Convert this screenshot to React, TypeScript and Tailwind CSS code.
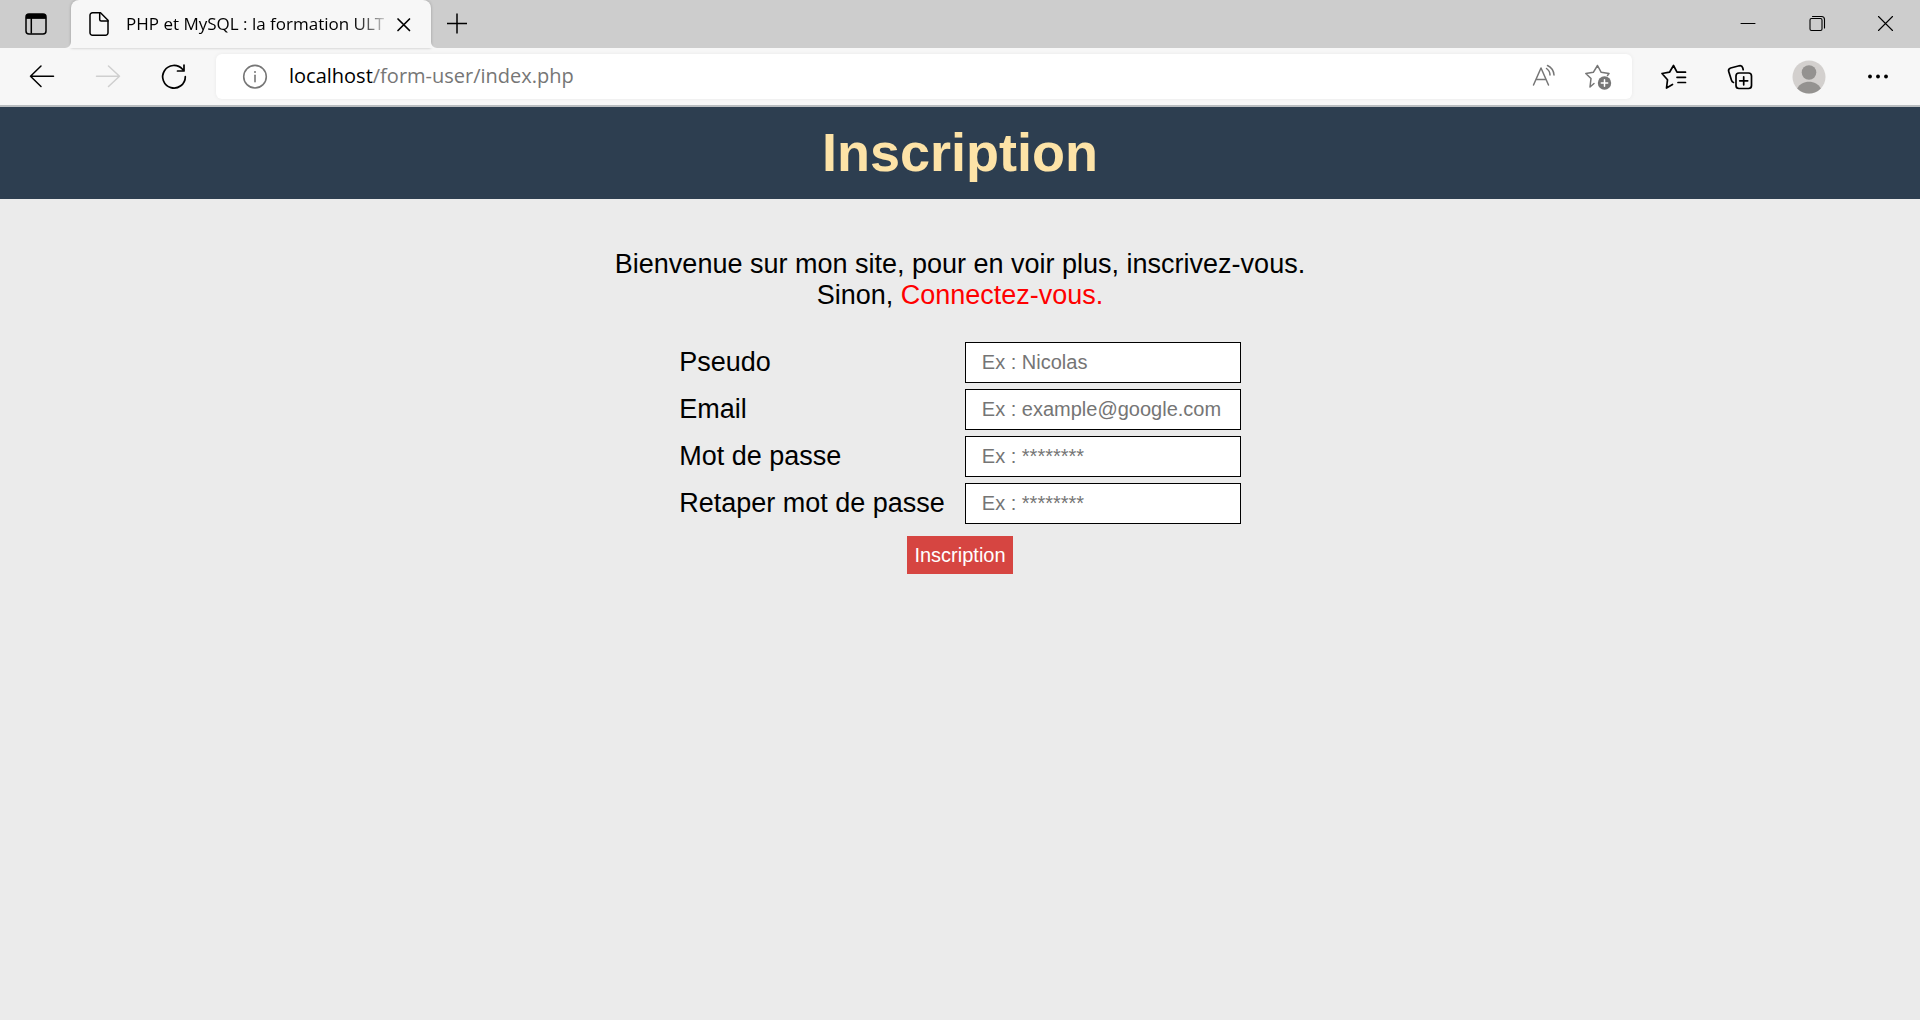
import type { ReactNode } from "react";

function Icon({ size = 28, stroke = 1.5, className = "", children }: { size?: number; stroke?: number; className?: string; children: ReactNode }) {
  return (
    <svg
      width={size}
      height={size}
      viewBox={`0 0 ${size} ${size}`}
      fill="none"
      stroke="currentColor"
      strokeWidth={stroke}
      strokeLinecap="round"
      strokeLinejoin="round"
      aria-hidden="true"
      className={`shrink-0 ${className}`}
    >
      {children}
    </svg>
  );
}

function IconButton({ label, className, children }: { label: string; className: string; children: ReactNode }) {
  return (
    <button type="button" aria-label={label} className={`flex shrink-0 items-center justify-center ${className}`}>
      {children}
    </button>
  );
}

function TabStrip() {
  return (
    <div className="flex h-12 items-stretch bg-[#cdcdcd] text-black">
      <IconButton label="Menu des onglets" className="w-[71px]">
        <Icon size={24} stroke={1.5}>
          <rect x="2" y="2" width="20" height="20" rx="3" />
          <path d="M2 6.500V5a3 3 0 0 1 3-3h14a3 3 0 0 1 3 3v1.500z" fill="currentColor" stroke="none" />
          <path d="M2.500 6H21.500M7.300 7v14" />
        </Icon>
      </IconButton>

      <div className="relative flex w-[360px] items-center rounded-t-lg bg-[#f7f7f7] pl-[14px] shadow-[0_0_3px_rgba(0,0,0,0.25)]">
        <svg width="6" height="6" viewBox="0 0 6 6" className="absolute bottom-0 -left-[6px]" aria-hidden="true">
          <path d="M6 0v6H0A6 6 0 0 0 6 0z" fill="#f7f7f7" />
        </svg>
        <svg width="6" height="6" viewBox="0 0 6 6" className="absolute -right-[6px] bottom-0" aria-hidden="true">
          <path d="M0 0v6h6A6 6 0 0 1 0 0z" fill="#f7f7f7" />
        </svg>
        <Icon size={28}>
          <path d="M7.500 2.800h8L23 10.200v12.500a2.500 2.500 0 0 1-2.500 2.500h-13A2.500 2.500 0 0 1 5 22.700V5.300a2.500 2.500 0 0 1 2.500-2.500z" />
          <path d="M14.700 3v6.500a1.500 1.500 0 0 0 1.500 1.500H23" />
        </Icon>
        <span className="ml-[13px] w-[262px] whitespace-nowrap bg-linear-to-r from-black from-85% to-[#e4e4e4] to-100% bg-clip-text font-['Open_Sans',sans-serif] text-[17px] leading-6 text-transparent">
          PHP et MySQL : la formation ULT
        </span>
        <IconButton label="Fermer l'onglet" className="h-8 w-8">
          <Icon size={16} stroke={1.7}>
            <path d="M2 3l11.500 11.500M13.500 3L2 14.500" />
          </Icon>
        </IconButton>
      </div>

      <IconButton label="Nouvel onglet" className="w-[52px]">
        <Icon size={24}>
          <path d="M2 11.500h20M12 1.500v20" strokeLinecap="butt" />
        </Icon>
      </IconButton>

      <div className="ml-auto flex">
        <IconButton label="Réduire" className="w-[69px]">
          <Icon size={18} stroke={1}>
            <path d="M2 8.500h14" />
          </Icon>
        </IconButton>
        <IconButton label="Restaurer" className="w-[69px]">
          <Icon size={18} stroke={1.1}>
            <rect x="2" y="3.500" width="12" height="12" rx="1.500" />
            <path d="M4.500 1.500h9a3 3 0 0 1 3 3V13" />
          </Icon>
        </IconButton>
        <IconButton label="Fermer" className="w-[69px]">
          <Icon size={18} stroke={1.1}>
            <path d="M1.500 1.500l14 14M15.500 1.500l-14 14" />
          </Icon>
        </IconButton>
      </div>
    </div>
  );
}

function Toolbar() {
  return (
    <div className="flex h-[59px] items-center border-b-2 border-[#b9bdc0] bg-[#f7f7f7] px-[9px] text-black">
      <IconButton label="Précédent" className="h-11 w-[66px]">
        <Icon>
          <path d="M13 3L2.500 13.200 13 23.500M2.500 13.200h23" />
        </Icon>
      </IconButton>
      <IconButton label="Suivant" className="h-11 w-[66px] text-[#cfcfcf]">
        <Icon>
          <path d="M14.500 3L25.500 13.200 14.500 23.500M25.500 13.200H2.500" />
        </Icon>
      </IconButton>
      <IconButton label="Actualiser" className="h-11 w-[66px]">
        <Icon stroke={1.7}>
          <path d="M25.300 13.700A11.300 11.300 0 1 1 22.500 6.300M24 2v6h-6.500" />
        </Icon>
      </IconButton>

      <div className="mx-[9px] flex h-[45px] min-w-0 flex-1 items-center rounded-md bg-white pr-[7px] text-[#767676] shadow-[0_0_4px_rgba(0,0,0,0.06)]">
        <IconButton label="Informations sur le site" className="ml-[9px] h-10 w-[60px]">
          <Icon stroke={1.6}>
            <circle cx="14" cy="13.700" r="11.300" />
            <path d="M14 12.300v6.500" />
            <circle cx="14" cy="9" r="1" fill="currentColor" stroke="none" />
          </Icon>
        </IconButton>
        <a href="#adresse" className="ml-1 flex-1 whitespace-nowrap pb-0.5 font-['Open_Sans',sans-serif] text-[20px] leading-7">
          <span className="text-black">localhost</span>/form-user/index.php
        </a>
        <IconButton label="Lecture à voix haute" className="h-10 w-[54px]">
          <Icon>
            <path d="M3.500 22L11 5l7.500 17M6.500 16.500h9" />
            <path d="M16.500 5.500a8 8 0 0 1 3.500 6.500M17.500 2.500a11.500 11.500 0 0 1 6.500 9.500" />
          </Icon>
        </IconButton>
        <IconButton label="Ajouter aux favoris" className="h-10 w-[54px]">
          <Icon>
            <path d="M10 20.500l-4 3.500 1-8.500L1.800 10.500l7.500-1.200L13.500 2.500l3.700 6.800 7.800 1.200-1.500 2" />
            <circle cx="20.500" cy="20" r="6.700" fill="currentColor" stroke="none" />
            <path d="M17.300 20h6.400M20.500 16.800v6.400" stroke="white" />
          </Icon>
        </IconButton>
      </div>

      <IconButton label="Favoris" className="h-11 w-[66px]">
        <Icon stroke={1.7}>
          <path d="M12.500 21.500l-6 3.500 1-8.200L2 10.500l7.500-1.300L13.500 2.500l3.500 6.700h8.500M17 14.300h8.500M18 19.500h7.500" />
        </Icon>
      </IconButton>
      <IconButton label="Collections" className="h-11 w-[66px]">
        <Icon stroke={1.7}>
          <rect x="10" y="10" width="15.500" height="15.500" rx="3" />
          <path d="M17.700 13.800v8M13.700 17.800h8" />
          <path d="M7.500 19.500c-1-.3-1.700-1-2-2.200L2.700 8.500c-.5-1.700.3-3 2-3.500l8.500-2.200c1.700-.4 3 .3 3.500 2l.5 2" />
        </Icon>
      </IconButton>
      <IconButton label="Profil" className="h-11 w-[72px]">
        <svg width="34" height="34" viewBox="0 0 34 34" aria-hidden="true">
          <circle cx="17" cy="17" r="16.500" fill="#d3d0ce" />
          <circle cx="17" cy="12.500" r="7.300" fill="#949290" />
          <path d="M5.200 28.500C7.300 24.200 12 21.800 17 21.800s9.700 2.400 11.800 6.700A16.500 16.500 0 0 1 5.200 28.500z" fill="#949290" />
        </svg>
      </IconButton>
      <IconButton label="Paramètres et plus" className="h-11 w-[66px]">
        <svg width="28" height="28" viewBox="0 0 28 28" fill="currentColor" aria-hidden="true">
          <circle cx="6" cy="13.500" r="1.900" />
          <circle cx="14" cy="13.500" r="1.900" />
          <circle cx="22" cy="13.500" r="1.900" />
        </svg>
      </IconButton>
    </div>
  );
}

const fields = [
  { id: "pseudo", label: "Pseudo", type: "text", placeholder: "Ex : Nicolas" },
  { id: "email", label: "Email", type: "email", placeholder: "Ex : example@google.com" },
  { id: "password", label: "Mot de passe", type: "password", placeholder: "Ex : ********" },
  { id: "password-confirm", label: "Retaper mot de passe", type: "password", placeholder: "Ex : ********" },
];

export default function App() {
  return (
    <div className="min-h-screen bg-[#ebebeb] font-['Liberation_Sans',Arial,sans-serif] text-black">
      <TabStrip />
      <Toolbar />
      <header className="bg-[#2d3e50] pt-[14px] pb-4 text-center">
        <h1 className="text-[54px] font-bold leading-[62px] text-[#fde3a7]">Inscription</h1>
      </header>
      <main className="flex flex-col items-center px-4 pt-[50px]">
        <p className="text-center text-[27px] leading-[31px]">
          Bienvenue sur mon site, pour en voir plus, inscrivez-vous.
          <br />
          Sinon,{" "}
          <a href="#connexion" className="text-[#ff0000]">
            Connectez-vous.
          </a>
        </p>
        <form className="mt-[31px] flex flex-col items-center" onSubmit={(event) => event.preventDefault()}>
          <div className="grid grid-cols-[auto_276px] items-center gap-x-5 gap-y-[6px]">
            {fields.map((field) => (
              <div key={field.id} className="contents">
                <label htmlFor={field.id} className="text-[27px] leading-[31px]">
                  {field.label}
                </label>
                <input
                  id={field.id}
                  type={field.type}
                  placeholder={field.placeholder}
                  className="h-[41px] w-full border border-black bg-white px-4 text-[20px] leading-[23px] placeholder:text-[#757575]"
                />
              </div>
            ))}
          </div>
          <button type="submit" className="mt-3 h-[38px] bg-[#d64541] px-[7px] text-[20px] leading-[23px] text-white">
            Inscription
          </button>
        </form>
      </main>
    </div>
  );
}
